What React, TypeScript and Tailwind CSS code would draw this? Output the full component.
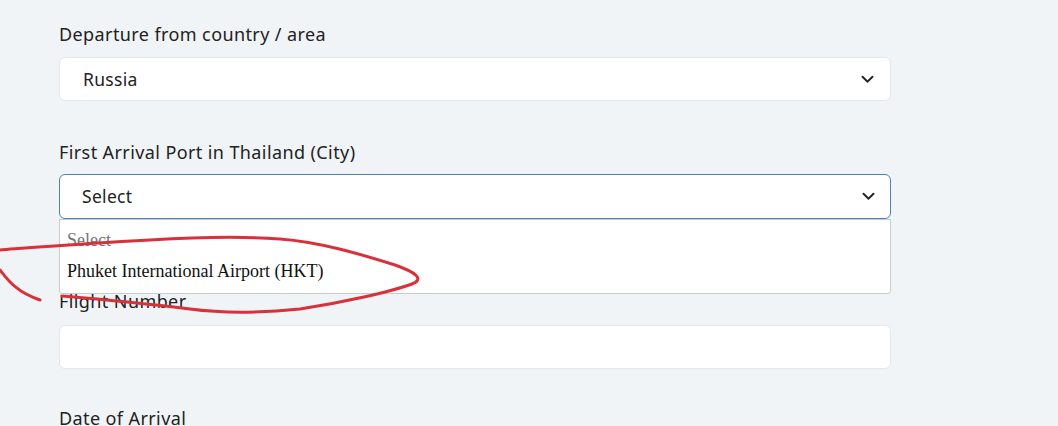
import { useState } from 'react';

function Chevron() {
  return (
    <svg width="13" height="9" viewBox="0 0 13 9" className="shrink-0">
      <path d="M1.5 1.8 L6.5 6.6 L11.5 1.8" fill="none" stroke="#222" strokeWidth="2" strokeLinecap="round" />
    </svg>
  );
}

export default function App() {
  const [value] = useState('Select');

  return (
    <div className="relative w-[1058px] h-[426px] overflow-hidden bg-[#f1f4f7] font-['Noto_Sans','Lato',sans-serif] text-[#222]">
      <div className="w-[832px] ml-[59px] pt-[22px]">
        <label className="block text-[18px] leading-[24px] tracking-[0.4px]">Departure from country / area</label>
        <div className="mt-[11px] h-[44px] rounded-[6px] border border-[#e4e7eb] bg-white flex items-center justify-between pl-[23px] pr-[16px]">
          <span className="text-[17.5px] tracking-[0.3px]">Russia</span>
          <Chevron />
        </div>

        <label className="block mt-[39px] text-[18px] leading-[24px] tracking-[0.4px]">First Arrival Port in Thailand (City)</label>
        <div className="relative mt-[10px]">
          <div className="h-[45px] rounded-[6px] border-[1.5px] border-[#4a82bb] bg-white flex items-center justify-between pl-[22px] pr-[15px]">
            <span className="text-[17.5px] tracking-[0.3px]">{value}</span>
            <Chevron />
          </div>
          <div className="absolute left-0 top-[45px] w-full h-[75px] z-10 bg-white border border-[#c9cbce] rounded-b-[3px] font-['Liberation_Serif',serif] text-[18px] pl-[7px]">
            <div className="pt-[9px] leading-[22px] text-[#757575]">Select</div>
            <div className="mt-[9px] leading-[22px] text-[#111]">Phuket International Airport (HKT)</div>
          </div>
        </div>

        <label className="block mt-[70px] text-[18px] leading-[24px] tracking-[0.4px]">Flight Number</label>
        <div className="mt-[12px] h-[44px] rounded-[6px] border border-[#e4e7eb] bg-white" />

        <label className="block mt-[37px] text-[18px] leading-[24px] tracking-[0.4px]">Date of Arrival</label>
      </div>

      {/* hand-drawn red annotation */}
      <svg className="absolute inset-0 z-20 pointer-events-none" width="1058" height="426" viewBox="0 0 1058 426">
        <path
          d="M0 250 C40 247 90 243 150 240 C200 237 240 236 280 239 C320 242 360 254 395 265 C415 272 425 279 412 284 C390 292 340 303 300 309 C260 313 220 313 190 309 C150 304 110 300 62 296"
          fill="none" stroke="#d8313c" strokeWidth="3" strokeLinecap="round" />
        <path d="M0 270 C8 280 16 292 40 300" fill="none" stroke="#d8313c" strokeWidth="3" strokeLinecap="round" />
      </svg>
    </div>
  );
}
